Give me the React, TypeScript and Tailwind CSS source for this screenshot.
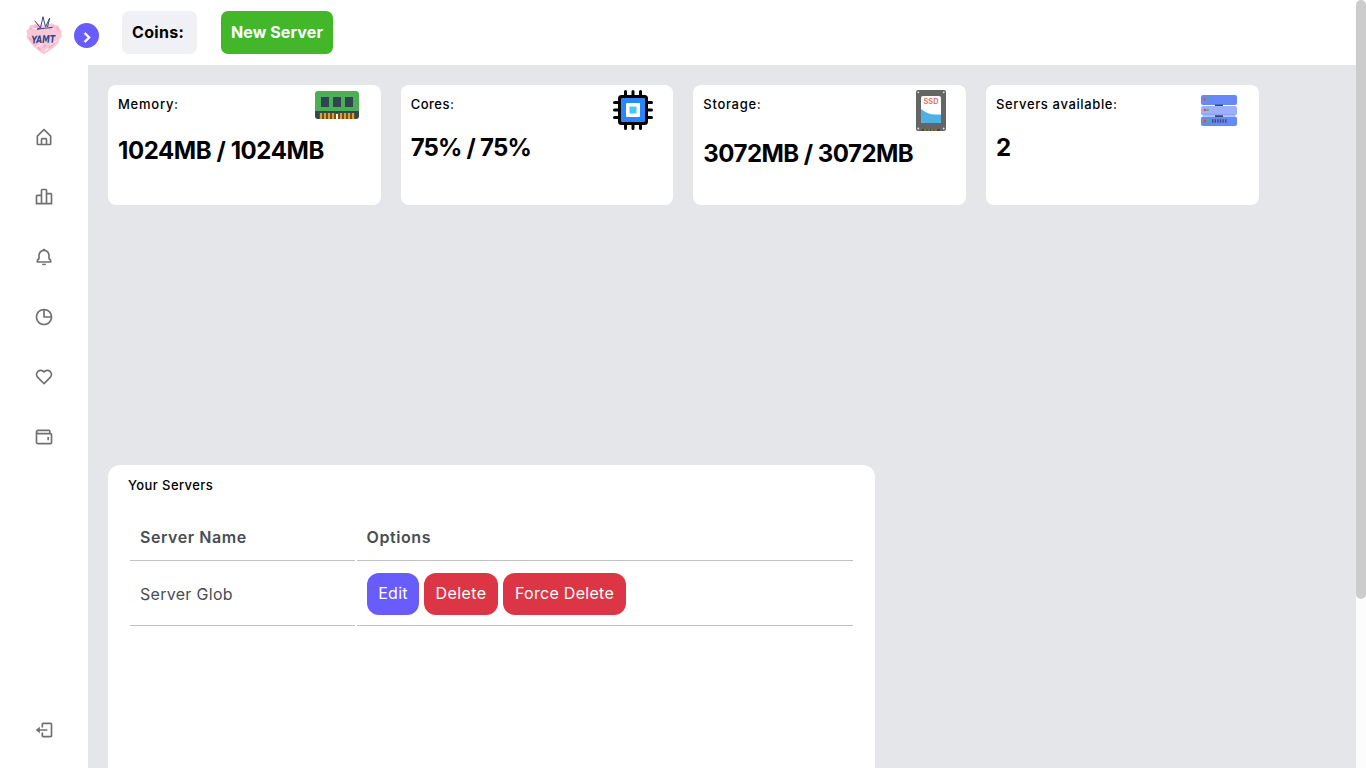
import type { ReactNode } from "react";
import { BiBarChartAlt2, BiBell, BiHeart, BiPieChartAlt, BiWallet, BiLogOut, BiChevronRight } from "react-icons/bi";

function HomeIcon() {
  return (
    <svg width="20" height="20" viewBox="0 0 24 24" fill="currentColor">
      <path d="M5 22h14a2 2 0 0 0 2-2v-9a1 1 0 0 0-.29-.71l-8-8a1 1 0 0 0-1.41 0l-8 8A1 1 0 0 0 3 11v9a2 2 0 0 0 2 2zm5-2v-5h4v5zm-5-8.59 7-7 7 7V20h-3v-5a2 2 0 0 0-2-2h-4a2 2 0 0 0-2 2v5H5z" />
    </svg>
  );
}

function Logo() {
  return (
    <svg width="38" height="40" viewBox="0 0 38 40">
      <path d="M19 38.6C15 36 11 33 6.500 28L4 25 1.500 21 2.200 18 1.300 15 4 12.500 5 9.500 9 8.500 12 7.300 16 8.500 19 9.800 22 8.300 27 7.300 30 9 33.500 9.500 34.500 12.500 36.700 15 36 18 37 20.500 34.500 23 33.500 27C29 32 25 34 19 38.600Z" fill="#fac8d7" />
      <path d="M5 13l8-3M4 22l4 3M10 29l6 5M24 32l6-5M31 11l3 4M13 12l4 1M24 13l5-3M18 32l3-3" stroke="#f5abc3" strokeWidth="1.600" fill="none" />
      <path d="M7 12l5 1M20 35l3-3M11 31l6-3M25 29l6-4" stroke="#fde1e9" strokeWidth="1.500" fill="none" />
      <path d="M12 13.200 15.500 12 9.700 4.700M15.500 12 18 .7 20.500 11 24.700 2 22.500 11M12 13.200 27.500 11.300" stroke="#36488c" strokeWidth="1" fill="none" />
      <text x="18.300" y="27" textAnchor="middle" textLength="24" lengthAdjust="spacingAndGlyphs" fontFamily="DejaVu Sans" fontWeight="bold" fontStyle="italic" fontSize="10.500" fill="#33468a" transform="rotate(-2 19 24)">YAMT</text>
    </svg>
  );
}

function MemoryIcon() {
  return (
    <svg width="44" height="28" viewBox="0 0 44 28">
      <path d="M3 0h38q3 0 3 3v18H0V3q0-3 3-3z" fill="#4caf57" />
      <path d="M0 20h44v5q0 3-3 3H3q-3 0-3-3z" fill="#2e4a4c" />
      <path d="M6 6h8v10H6zM18 6h8v10h-8zM30 6h8v10h-8z" fill="#2e4650" />
      <path d="M4 22h36v6H4z" fill="#7a4d10" />
      <path d="M5 22h2v6H5zM9 22h2v6H9zM13 22h2v6h-2zM17 22h2v6h-2zM25 22h2v6h-2zM29 22h2v6h-2zM33 22h2v6h-2zM37 22h2v6h-2z" fill="#d5a04a" />
      <path d="M21 23h2v5h-2z" fill="#fff" />
    </svg>
  );
}

function CpuIcon() {
  return (
    <svg width="40" height="40" viewBox="0 0 40 40">
      <path d="M12.500 1.500v37M20 1.500v37M27.500 1.500v37M1.500 12.500h37M1.500 20h37M1.500 27.500h37" stroke="#000" strokeWidth="3" strokeLinecap="round" />
      <rect x="5" y="5" width="30" height="30" rx="3.500" fill="#000" />
      <rect x="8" y="8" width="24" height="24" rx="1" fill="#2a86fb" />
      <rect x="13" y="13" width="14" height="14" rx="1" fill="#fff" />
      <rect x="16.500" y="16.500" width="7" height="7" rx=".5" fill="#44c8f8" />
    </svg>
  );
}

function SsdIcon() {
  return (
    <svg width="30" height="41" viewBox="0 0 30 41">
      <rect width="30" height="41" rx="2" fill="#636663" />
      <g fill="#e8e8e8"><circle cx="2.300" cy="2.300" r=".9" /><circle cx="27.700" cy="2.300" r=".9" /><circle cx="2.300" cy="38.500" r=".9" /><circle cx="27.700" cy="38.500" r=".9" /></g>
      <rect x="5" y="6" width="20" height="27" rx="2" fill="#fff" />
      <path d="M5 19c5 4 9 5.500 14 5.500h6V31q0 2-2 2H7q-2 0-2-2z" fill="#50afe3" />
      <text x="15" y="14" textAnchor="middle" fontFamily="Inter" fontWeight="600" fontSize="7" textLength="15" lengthAdjust="spacingAndGlyphs" fill="#e8655a">SSD</text>
      <path d="M6 39h18v2H6z" fill="#45423c" />
      <path d="M8 40h14" stroke="#d39b3c" strokeWidth="1.200" strokeDasharray="2.500 1" />
    </svg>
  );
}

function ServersIcon() {
  return (
    <svg width="36" height="31" viewBox="0 0 36 31">
      <rect y="0" width="36" height="10" rx="2" fill="#6788fb" />
      <rect y="11" width="36" height="9.500" rx="2" fill="#9cb1fd" />
      <rect y="21.500" width="36" height="9.500" rx="2" fill="#6788fb" />
      <path d="M2 18.800h32v1.700H2z" fill="#8ca3f5" />
      <path d="M14 9.500h8v1.500h-8zM14 20.300h8v1.700h-8z" fill="#444a58" />
      <g fill="#ee4b3d"><circle cx="4" cy="4.500" r="1.300" /><circle cx="4" cy="15" r="1.300" /><circle cx="4" cy="26" r="1.500" /></g>
      <g fill="#45c53a"><circle cx="6.600" cy="4.500" r="1.200" /><circle cx="6.600" cy="15" r="1.200" /><circle cx="6.600" cy="26" r="1.400" /></g>
      <path d="M11 26h14.500" stroke="#3f4c77" strokeWidth="3.500" strokeDasharray="1.400 1.200" />
    </svg>
  );
}

function Card({ label, labelClass, value, valueClass, icon, iconClass }: {
  label: string; labelClass: string; value: string; valueClass: string; icon: ReactNode; iconClass: string;
}) {
  return (
    <article className="flex h-[120px] rounded-lg bg-white pl-2.5">
      <div className="min-w-0 flex-1 whitespace-nowrap pt-[9px]">
        <h2 className={`text-[13px] leading-5 font-medium ${labelClass}`}>{label}</h2>
        <p className={`text-2xl leading-9 font-bold ${valueClass}`}>{value}</p>
      </div>
      <div className={`shrink-0 ${iconClass}`}>{icon}</div>
    </article>
  );
}

export default function App() {
  const nav = [<HomeIcon />, <BiBarChartAlt2 />, <BiBell />, <BiPieChartAlt />, <BiHeart />, <BiWallet />];
  return (
    <div className="flex h-screen w-full overflow-hidden bg-[#e4e6ea] font-[Inter,sans-serif] text-black">
      <aside className="flex w-[88px] shrink-0 flex-col items-center bg-white text-[20px] text-[#707070]">
        <div className="h-[107.4px] pt-4"><Logo /></div>
        <nav className="flex flex-col">
          {nav.map((icon, i) => (
            <a key={i} className="flex h-[60px] w-[60px] items-center justify-center">{icon}</a>
          ))}
        </nav>
        <a className="mt-auto mb-7 flex h-5 items-center"><BiLogOut /></a>
      </aside>

      <div className="flex min-w-0 flex-1 flex-col">
        <header className="flex h-[65px] shrink-0 items-start bg-white pt-[11px] pl-[34px]">
          <div className="flex h-[43px] w-[75px] items-center rounded-[7px] bg-[#f0f1f6] pb-px pl-2.5 font-bold tracking-[0.3px]">Coins:</div>
          <button className="ml-6 flex h-[43px] w-[112px] items-center whitespace-nowrap rounded-[7px] bg-[#43b72a] pb-px pl-2.5 font-bold tracking-[0.1px] text-white">New Server</button>
        </header>

        <main className="flex flex-1 flex-col px-5 pt-5">
          <section className="grid w-[1150.6px] grid-cols-4 gap-5">
            <Card label="Memory:" labelClass="tracking-[0.75px]" value="1024MB / 1024MB" valueClass="mt-[19px] tracking-[-0.42px]" icon={<MemoryIcon />} iconClass="pt-1.5 pr-[22px]" />
            <Card label="Cores:" labelClass="tracking-[0.5px]" value="75% / 75%" valueClass="mt-4 tracking-[-0.8px]" icon={<CpuIcon />} iconClass="pt-[5px] pr-5" />
            <Card label="Storage:" labelClass="tracking-[0.7px]" value="3072MB / 3072MB" valueClass="mt-[22px] tracking-[-0.52px]" icon={<SsdIcon />} iconClass="pt-[5px] pr-5" />
            <Card label="Servers available:" labelClass="tracking-[0.63px]" value="2" valueClass="mt-4" icon={<ServersIcon />} iconClass="pt-2.5 pr-[22px]" />
          </section>

          <section className="mt-[260px] w-[767px] flex-1 rounded-t-xl bg-white px-[22px] pt-2.5">
            <h2 className="-ml-0.5 text-[13px] leading-5 font-medium tracking-[0.4px]">Your Servers</h2>
            <div className="mt-5 grid grid-cols-[225px_496px] gap-x-0.5 text-[#484d54]">
              <div className="h-[46px] border-b border-[#c0c0c0] pt-2.5 pl-2.5 font-semibold tracking-[0.55px]">Server Name</div>
              <div className="h-[46px] border-b border-[#c0c0c0] pt-2.5 pl-[9.5px] font-semibold tracking-[0.6px]">Options</div>
              <div className="flex h-[65px] items-center border-b border-[#c0c0c0] pt-0.5 pl-2.5 tracking-[0.3px]">Server Glob</div>
              <div className="flex h-[65px] items-start gap-[5px] border-b border-[#c0c0c0] pt-3 pl-2.5 text-white">
                <button className="h-[42px] w-[52px] rounded-xl bg-[#695cfe] pb-0.5 tracking-[0.3px]">Edit</button>
                <button className="h-[42px] w-[74px] rounded-xl bg-[#dc3545] pb-0.5 tracking-[0.45px]">Delete</button>
                <button className="h-[42px] w-[123px] rounded-xl bg-[#dc3545] pb-0.5 tracking-[0.3px]">Force Delete</button>
              </div>
            </div>
          </section>
        </main>
      </div>

      <div className="w-2.5 shrink-0 bg-[#fcfcfc]">
        <div className="h-[599px] rounded-[5px] bg-[#cccccc]" />
      </div>

      <button className="absolute top-[23px] left-[74px] flex h-[25px] w-[25px] items-center justify-center rounded-full bg-[#695cfe] pt-[3px] text-[21px] text-white">
        <BiChevronRight stroke="currentColor" strokeWidth="0.8" />
      </button>
    </div>
  );
}
